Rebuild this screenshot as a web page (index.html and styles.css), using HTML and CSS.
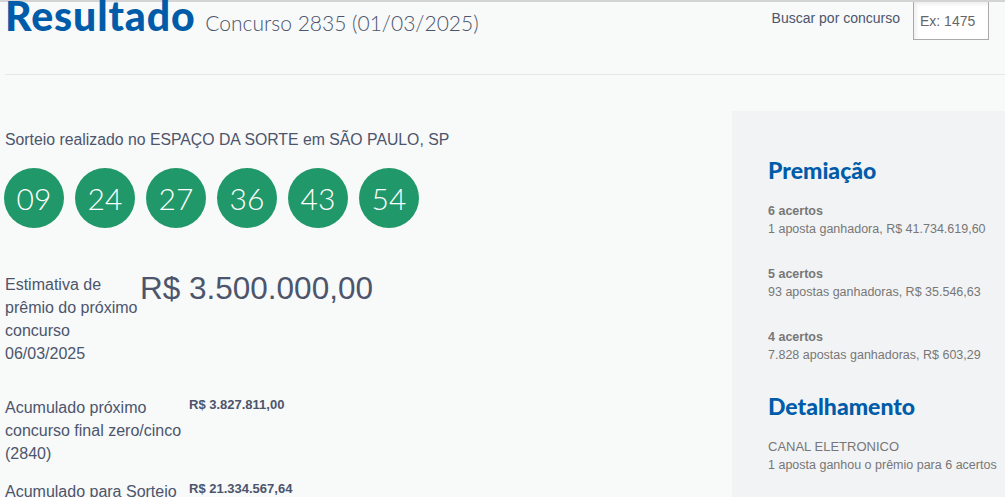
FILE: index.html
```html
<!DOCTYPE html>
<html lang="pt-BR">
<head>
  <meta charset="UTF-8" />
  <meta name="viewport" content="width=device-width, initial-scale=1.0" />
  <title>Mega-Sena - Resultado</title>
  <link rel="stylesheet" href="styles.css">
</head>
<body>
  <div class="page">
    <div class="topo">
      <h1 class="titulo">Resultado <span class="concurso">Concurso 2835 (01/03/2025)</span></h1>
      <div class="busca">
        <label for="busca">Buscar por concurso</label>
        <input type="text" id="busca" placeholder="Ex: 1475" />
      </div>
    </div>

    <div class="conteudo">
      <div class="principal">
        <p class="local">Sorteio realizado no ESPAÇO DA SORTE em SÃO PAULO, SP</p>
        <ul class="dezenas">
          <li>09</li>
          <li>24</li>
          <li>27</li>
          <li>36</li>
          <li>43</li>
          <li>54</li>
        </ul>

        <div class="estimativa">
          <p class="rotulo">Estimativa de prêmio do próximo concurso 06/03/2025</p>
          <p class="valor-grande">R$ 3.500.000,00</p>
        </div>

        <div class="acumulado">
          <p class="rotulo">Acumulado próximo concurso final zero/cinco (2840)</p>
          <p class="valor">R$ 3.827.811,00</p>
        </div>
        <div class="acumulado">
          <p class="rotulo">Acumulado para Sorteio Especial da Virada</p>
          <p class="valor">R$ 21.334.567,64</p>
        </div>
      </div>

      <div class="lateral">
        <h2>Premiação</h2>
        <div class="faixa">
          <p class="faixa-nome">6 acertos</p>
          <p>1 aposta ganhadora, R$ 41.734.619,60</p>
        </div>
        <div class="faixa">
          <p class="faixa-nome">5 acertos</p>
          <p>93 apostas ganhadoras, R$ 35.546,63</p>
        </div>
        <div class="faixa">
          <p class="faixa-nome">4 acertos</p>
          <p>7.828 apostas ganhadoras, R$ 603,29</p>
        </div>

        <h2 class="detalhe">Detalhamento</h2>
        <p class="canal">CANAL ELETRONICO</p>
        <p>1 aposta ganhou o prêmio para 6 acertos</p>
      </div>
    </div>
  </div>
</body>
</html>
```

FILE: styles.css
```css
body {
  margin: 0;
  background: #f8f9f9;
  font-family: "Liberation Sans", Arial, sans-serif;
  color: #4c556c;
  overflow: hidden;
}
p {
  margin: 0;
}
.page {
  border-top: 2px solid #d4d4d6;
}
.topo {
  display: flex;
  justify-content: space-between;
  align-items: flex-start;
  height: 72px;
  margin-left: 5px;
  border-bottom: 1px solid #e6e8e8;
}
.titulo {
  margin: -11px 0 0 0;
  font-family: "Lato", sans-serif;
  font-weight: 900;
  font-size: 41px;
  color: #005ca9;
  letter-spacing: 0.9px;
}
.concurso {
  margin-left: -1px;
  font-weight: 300;
  font-size: 21px;
  letter-spacing: 0;
  color: #4c556c;
}
.busca {
  display: flex;
  align-items: flex-start;
  gap: 13px;
  margin-right: 16px;
}
.busca label {
  margin-top: 8px;
  font-size: 14px;
}
.busca input {
  width: 76px;
  height: 38px;
  box-sizing: border-box;
  margin-top: 0;
  padding: 0 6px;
  border: 1px solid #aaa;
  border-top: none;
  background: #fff;
  font-family: "Liberation Sans", Arial, sans-serif;
  font-size: 14px;
  box-shadow: inset 2px 2px 4px rgba(0,0,0,0.08);
}
.busca input::placeholder {
  color: #666;
}
.conteudo {
  display: flex;
  margin-top: 36px;
}
.principal {
  flex: 1;
  padding: 20px 0 0 5px;
}
.local {
  font-size: 15.8px;
}
.dezenas {
  display: flex;
  gap: 11px;
  list-style: none;
  margin: 19px 0 0 -1px;
  padding: 0;
}
.dezenas li {
  width: 60px;
  height: 60px;
  border-radius: 50%;
  background: #209869;
  color: #fff;
  font-family: "Lato", sans-serif;
  font-weight: 300;
  font-size: 30px;
  display: flex;
  align-items: center;
  justify-content: center;
}
.estimativa {
  display: flex;
  margin-top: 42px;
}
.estimativa .rotulo {
  width: 135px;
  font-size: 16px;
  line-height: 23px;
  padding-top: 3px;
}
.valor-grande {
  font-size: 31.5px;
}
.acumulado {
  display: flex;
  margin-top: 31px;
}
.acumulado + .acumulado {
  margin-top: 15px;
}
.acumulado .rotulo {
  width: 184px;
  font-size: 16px;
  line-height: 23px;
}
.acumulado .valor {
  font-size: 13px;
  font-weight: bold;
  line-height: 18px;
}
.lateral {
  width: 237px;
  background: #f2f3f5;
  padding: 44px 0 40px 36px;
  font-size: 12.5px;
  line-height: 18px;
  color: #777;
}
.lateral h2 {
  margin: 0 0 17px 0;
  font-family: "Lato", sans-serif;
  font-weight: 900;
  font-size: 23px;
  line-height: 30px;
  color: #005ca9;
}
.faixa {
  margin-bottom: 27px;
}
.faixa-nome {
  font-weight: bold;
}
.lateral .detalhe {
  margin-bottom: 17px;
}
.canal {
  font-size: 13px;
}
```
